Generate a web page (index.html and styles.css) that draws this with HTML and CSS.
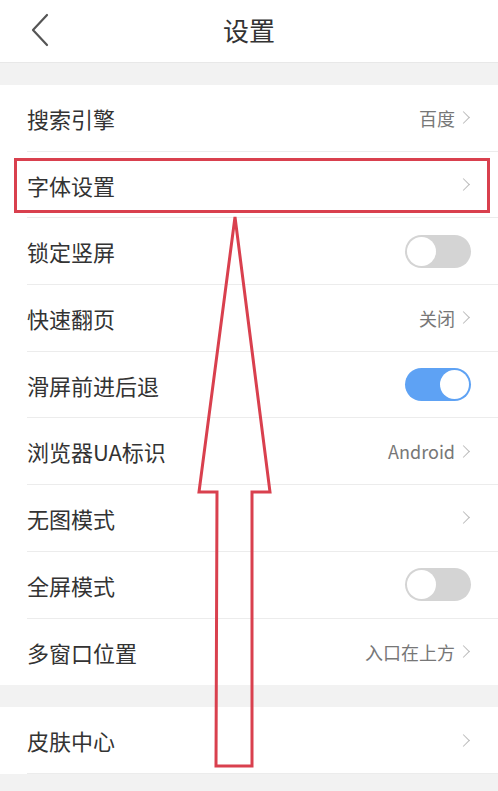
FILE: index.html
```html
<!DOCTYPE html>
<html lang="zh">
<head>
<meta charset="utf-8">
<title>设置</title>
<link rel="stylesheet" href="styles.css">
</head>
<body>
<div class="page">
  <header class="topbar">
    <svg class="back" width="20" height="34" viewBox="0 0 20 34"><path d="M17 2 L3 17 L17 32" fill="none" stroke="#555" stroke-width="2.2" stroke-linecap="round" stroke-linejoin="round"/></svg>
    <h1 class="title">设置</h1>
  </header>
  <div class="gap"></div>
  <ul class="group">
    <li class="row"><span class="label">搜索引擎</span><span class="value">百度<i class="chev"></i></span></li>
    <li class="row"><span class="label">字体设置</span><span class="value"><i class="chev"></i></span></li>
    <li class="row"><span class="label">锁定竖屏</span><span class="switch"></span></li>
    <li class="row"><span class="label">快速翻页</span><span class="value">关闭<i class="chev"></i></span></li>
    <li class="row"><span class="label">滑屏前进后退</span><span class="switch on"></span></li>
    <li class="row"><span class="label">浏览器UA标识</span><span class="value">Android<i class="chev"></i></span></li>
    <li class="row"><span class="label">无图模式</span><span class="value"><i class="chev"></i></span></li>
    <li class="row"><span class="label">全屏模式</span><span class="switch"></span></li>
    <li class="row last"><span class="label">多窗口位置</span><span class="value">入口在上方<i class="chev"></i></span></li>
  </ul>
  <div class="gap small"></div>
  <ul class="group">
    <li class="row"><span class="label">皮肤中心</span><span class="value"><i class="chev"></i></span></li>
  </ul>
  <div class="highlight"></div>
  <svg class="arrow" width="498" height="791" viewBox="0 0 498 791"><polygon points="235,217 270,492 252,492 252,766 216,766 217,492 199,492" fill="none" stroke="#d9404e" stroke-width="3" stroke-linejoin="miter"/></svg>
</div>
</body>
</html>
```
FILE: styles.css
```css
* { box-sizing: border-box; }
html, body { margin: 0; padding: 0; }
body {
  width: 498px;
  height: 791px;
  overflow: hidden;
  background: #f2f2f2;
  font-family: "Noto Sans CJK SC", "Noto Sans", sans-serif;
  color: #333;
}
.page { position: relative; width: 498px; height: 791px; }
.topbar {
  height: 63px;
  background: #fff;
  display: flex;
  align-items: center;
  justify-content: center;
  position: relative;
  border-bottom: 1px solid #e8e8e8;
  padding-bottom: 3px;
}
.back { position: absolute; left: 30px; top: 13px; }
.title { margin: 0; font-size: 26px; font-weight: 400; color: #333; line-height: 1; }
.gap { height: 22px; }
.gap.small { height: 22px; }
.group { list-style: none; margin: 0; padding: 0 0 0 27px; background: #fff; }
.row {
  height: 66.7px;
  display: flex;
  align-items: center;
  justify-content: space-between;
  padding-right: 27px;
  border-bottom: 1px solid #ececec;
}
.row.last { border-bottom: none; }
.label { font-size: 22px; color: #333; }
.value { font-size: 18px; color: #777; display: flex; align-items: center; }
.chev {
  display: inline-block;
  width: 9px;
  height: 9px;
  border-top: 1.6px solid #bbb;
  border-right: 1.6px solid #bbb;
  transform: rotate(45deg);
  margin-left: 4px;
  margin-right: 3px;
}
.switch {
  width: 66px;
  height: 33px;
  border-radius: 17px;
  background: #d4d4d4;
  position: relative;
}
.switch::after {
  content: "";
  position: absolute;
  left: 2px;
  top: 2px;
  width: 29px;
  height: 29px;
  border-radius: 50%;
  background: #fff;
}
.switch.on { background: #5ea2f4; }
.switch.on::after { left: 35px; }
.highlight {
  position: absolute;
  left: 14px;
  top: 158px;
  width: 476px;
  height: 55px;
  border: 3px solid #d9404e;
}
.arrow { position: absolute; left: 0; top: 0; pointer-events: none; }
```
